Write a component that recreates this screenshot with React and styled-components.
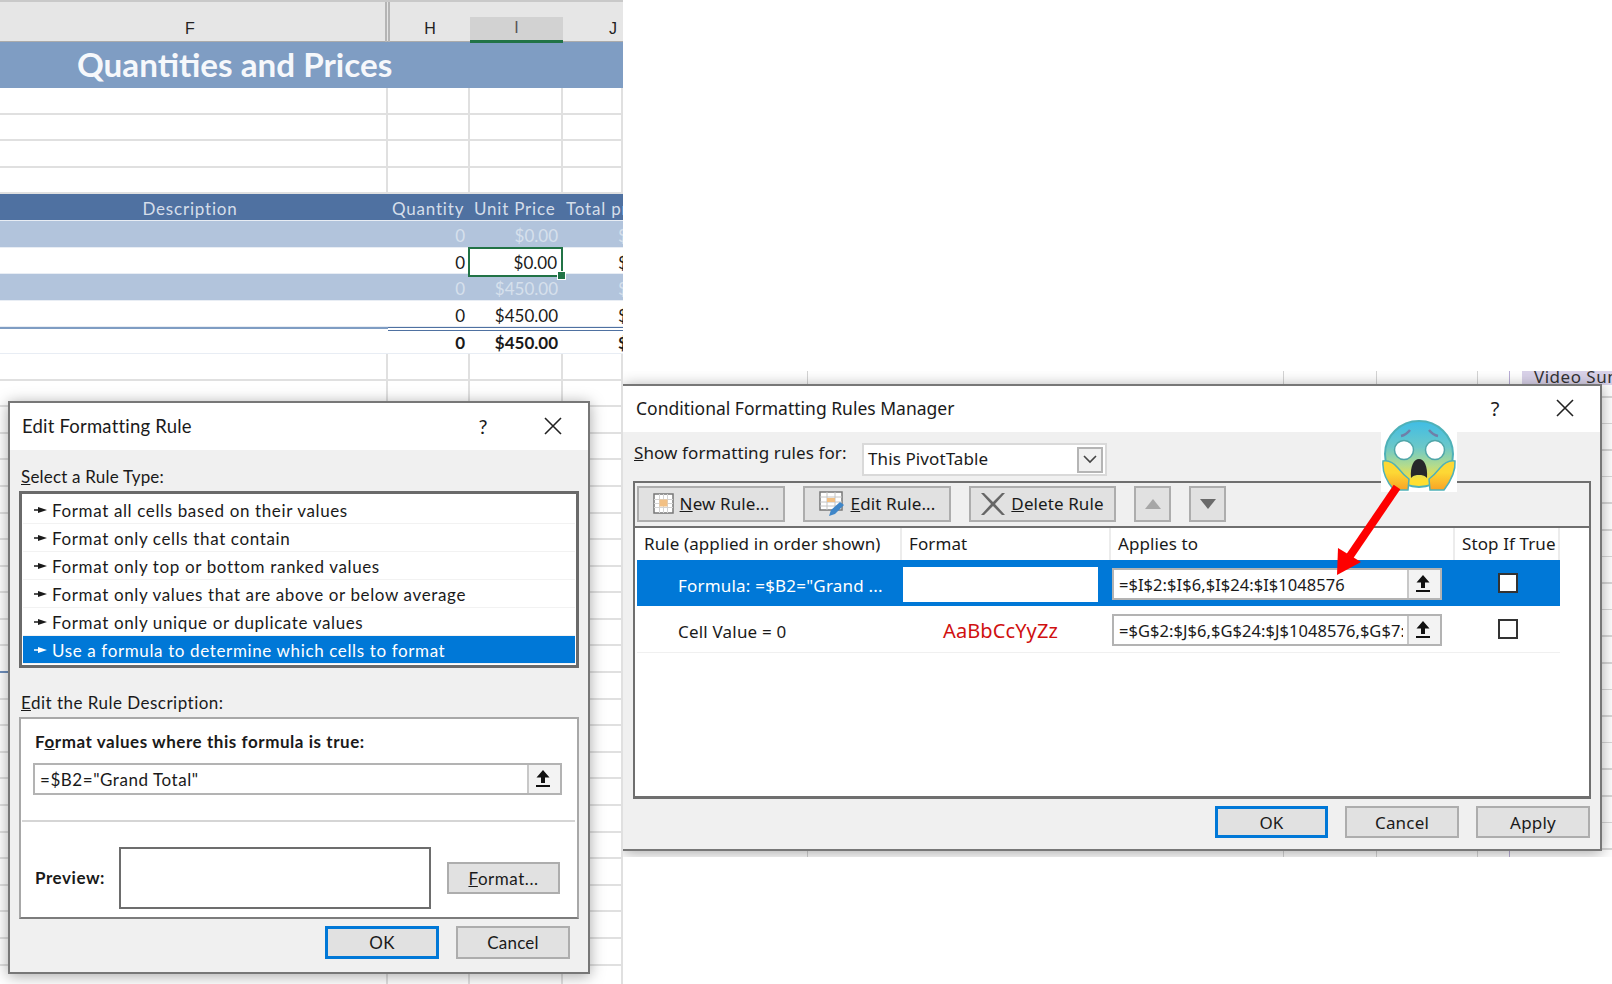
import styled, { createGlobalStyle } from "styled-components";

const uiFont = `"Noto Sans", "Open Sans", sans-serif`;
const sheetFont = `Lato, "Open Sans", sans-serif`;

const GlobalStyle = createGlobalStyle`
  html, body {
    margin: 0;
    background: #fff;
  }
  * {
    box-sizing: border-box;
  }
`;

const Page = styled.div`
  position: relative;
  width: 1612px;
  height: 984px;
  overflow: hidden;
  background: #fff;
  font-family: ${uiFont};
  color: #1a1a1a;
`;

/* left spreadsheet */
const LeftSheet = styled.div`
  position: absolute;
  left: 0;
  top: 0;
  width: 623px;
  height: 984px;
  overflow: hidden;
  font-family: ${sheetFont};
`;

const ColumnHeader = styled.div`
  display: grid;
  grid-template-columns: 388px 82px 93px 60px;
  height: 42px;
  background: #e6e6e6;
  border-top: 2px solid #c9c9c9;
  border-bottom: 1px solid #ababab;
`;

const ColumnLetter = styled.div`
  display: flex;
  align-items: flex-end;
  justify-content: center;
  padding-bottom: 2px;
  padding-left: ${(p) => p.$left || 0}px;
  padding-right: ${(p) => p.$right || 0}px;
  font: 16px/22px "Liberation Sans", Arial, sans-serif;
  color: #222;
  ${(p) => p.$active && `
    margin-top: 15px;
    margin-bottom: -1px;
    padding-bottom: 1px;
    background: #d2d2d2;
    border-bottom: 3px solid #217346;
    color: #555;
  `}
  ${(p) => p.$split && `
    margin-left: -3px;
    border-left: 5px double #b5b5b5;
  `}
`;

const TitleBand = styled.div`
  height: 46px;
  background: #7f9dc3;
  color: #f6f8fb;
  font-size: 33.2px;
  font-weight: 700;
  line-height: 45px;
  padding-left: 77px;
`;

const SheetRow = styled.div`
  display: grid;
  grid-template-columns: 388px 82px 93px 60px;
  height: 26.6px;
  white-space: nowrap;
  background: ${(p) => (p.$kind === "head" ? "#4f71a1" : p.$kind === "tint" ? "#b2c4dc" : "#fff")};
  color: ${(p) => (p.$kind === "head" ? "#d5deea" : p.$kind === "tint" ? "#d6e0ec" : "#1a1a1a")};
  font-weight: ${(p) => (p.$kind === "total" ? 700 : 400)};
  border-bottom: ${(p) => (p.$kind ? "1px solid #e8edf4" : "none")};
  letter-spacing: ${(p) => (p.$kind === "head" ? "0.8px" : "0")};
  font-size: 17px;
  line-height: 26px;
`;

const SheetCell = styled.div`
  text-align: ${(p) => p.$align || "right"};
  padding: ${(p) => (p.$grid ? 0 : 2)}px ${(p) => p.$pad || 5}px 0 ${(p) => p.$left || 0}px;
  overflow: hidden;
  ${(p) => p.$grid && `
    border-right: 2px solid #e0e0e0;
    border-bottom: 2px solid #e0e0e0;
  `}
  ${(p) => p.$ruled && `border-bottom: 2px solid #6f8fbc;`}
  ${(p) => p.$rule === "single" && `box-shadow: inset 0 2px 0 #7f9dc3;`}
  ${(p) => p.$rule === "double" && `border-top: 4px double #4f71a1; padding-top: 0; line-height: 24px;`}
`;

const SelectedCell = styled(SheetCell)`
  position: relative;
  z-index: 2;
  height: 30px;
  margin: -1px 0 -3px -2px;
  padding-top: 1px;
  padding-right: 4px;
  background: #fff;
  border: 2px solid #217346;
  overflow: visible;
  &::after {
    content: "";
    position: absolute;
    right: -5px;
    bottom: -5px;
    width: 7px;
    height: 7px;
    background: #217346;
    border: 1px solid #fff;
  }
`;

/* right spreadsheet behind the manager dialog */
const RightSheet = styled.div`
  position: absolute;
  left: 623px;
  top: 371px;
  width: 989px;
  height: 486px;
  overflow: hidden;
  background-color: #fff;
  background-image:
    linear-gradient(#d4d4d4, #d4d4d4), linear-gradient(#d4d4d4, #d4d4d4),
    linear-gradient(#d4d4d4, #d4d4d4), linear-gradient(#d4d4d4, #d4d4d4),
    linear-gradient(#b9add6, #b9add6),
    repeating-linear-gradient(#fff 0 25px, #d8d8d8 25px 26.6px);
  background-size: 1px 100%, 1px 100%, 1px 100%, 1px 100%, 1px 100%, 100% 100%;
  background-position: 184px 0, 660px 0, 753px 0, 854px 0, 886px 0, 0 0;
  background-repeat: no-repeat;
`;

const VideoTag = styled.div`
  position: absolute;
  left: 899px;
  top: 0;
  width: 90px;
  height: 14px;
  padding-left: 12px;
  overflow: hidden;
  background: #d9d2e9;
  font-size: 17px;
  letter-spacing: 0.5px;
  line-height: 11px;
  white-space: nowrap;
  color: #333;
`;

/* dialogs */
const Window = styled.div`
  position: absolute;
  display: flex;
  flex-direction: column;
  background: #f0f0f0;
  border: 2px solid #777;
  box-shadow: 0 2px 14px rgba(0, 0, 0, 0.35);
  font-size: 17px;
`;

const RuleWindow = styled(Window)`
  left: 8px;
  top: 401px;
  width: 582px;
  height: 573px;
  letter-spacing: 0.55px;
`;

const ManagerWindow = styled(Window)`
  left: 0;
  top: 13px;
  width: 979px;
  height: 467px;
  border-left: 0;
  letter-spacing: 0.1px;
`;

const TitleBar = styled.div`
  display: flex;
  align-items: center;
  flex-shrink: 0;
  height: ${(p) => p.$height}px;
  padding-left: ${(p) => p.$left}px;
  padding-right: 26px;
  padding-bottom: 2px;
  background: #fff;
  font-size: ${(p) => p.$size || 17.5}px;
  letter-spacing: ${(p) => p.$spacing || 0}px;
`;

const TitleText = styled.div`
  flex: 1;
  white-space: nowrap;
`;

const Help = styled.div`
  width: 14px;
  margin-right: 54px;
  text-align: center;
  font-size: 20px;
`;

const RuleBody = styled.div`
  display: flex;
  flex-direction: column;
  padding: 0 9px;
`;

const Label = styled.div`
  height: 20px;
  line-height: 20px;
  margin-top: ${(p) => p.$top}px;
  margin-bottom: 4px;
  padding-left: 2px;
  letter-spacing: ${(p) => p.$spacing}px;
  white-space: nowrap;
`;

const Key = styled.span`
  text-decoration: underline;
`;

const ListBox = styled.div`
  height: 177px;
  padding: 2px 1px 0;
  background: #fff;
  border: 3px solid #6a6a6a;
`;

const ListRow = styled.div`
  display: flex;
  align-items: center;
  gap: 4px;
  height: 28px;
  padding-left: 11px;
  padding-top: 1px;
  letter-spacing: 0.63px;
  white-space: nowrap;
  border-bottom: 1px solid #f2f2f2;
  background: ${(p) => (p.$selected ? "#0078d7" : "#fff")};
  color: ${(p) => (p.$selected ? "#fff" : "#1a1a1a")};
`;

const DescribeBox = styled.div`
  display: flex;
  flex-direction: column;
  height: 202px;
  padding-top: 13px;
  background: #fff;
  border: 2px solid #a8a8a8;
  border-bottom-color: #7c7c7c;
`;

const BoldLine = styled.div`
  height: 20px;
  line-height: 20px;
  margin-left: 14px;
  font-weight: 700;
  white-space: nowrap;
`;

const RefInput = styled.div`
  display: flex;
  flex-shrink: 0;
  height: 32px;
  padding-left: 5px;
  background: #fff;
  border: 2px solid #b3b3b3;
  line-height: 29px;
  white-space: nowrap;
  overflow: hidden;
`;

const FormulaInput = styled(RefInput)`
  width: 529px;
  margin: 11px 0 0 12px;
`;

const RefText = styled.div`
  flex: 1;
  margin-right: 4px;
  overflow: hidden;
`;

const RefButton = styled.div`
  display: flex;
  align-items: center;
  justify-content: center;
  flex-shrink: 0;
  width: 33px;
  padding-right: 3px;
  background: #f3f3f3;
  border-left: 2px solid #c8c8c8;
`;

const Divider = styled.div`
  height: 2px;
  margin: 25px 2px 25px 1px;
  background: #d5d5d5;
`;

const PreviewRow = styled.div`
  display: flex;
  align-items: center;
`;

const PreviewLabel = styled(BoldLine)`
  width: 84px;
`;

const PreviewBox = styled.div`
  width: 312px;
  height: 62px;
  margin-right: 16px;
  border: 2px solid #6d6d6d;
  background: #fff;
`;

const Button = styled.div`
  display: flex;
  align-items: center;
  justify-content: center;
  width: ${(p) => p.$w || 114}px;
  height: ${(p) => p.$h || 33}px;
  background: #e1e1e1;
  border: 2px solid ${(p) => (p.$primary ? "#0078d7" : "#adadad")};
  ${(p) => p.$primary && "border-width: 3px;"}
  white-space: nowrap;
`;

const Footer = styled.div`
  display: flex;
  justify-content: flex-end;
  gap: 17px;
  margin-top: 7px;
  padding-right: ${(p) => p.$right}px;
  letter-spacing: 0.2px;
`;

/* manager dialog */
const FilterRow = styled.div`
  display: flex;
  margin: 10px 0 5px 11px;
  padding-top: 1px;
`;

const FilterLabel = styled.div`
  width: 228px;
  height: 22px;
  line-height: 20px;
  letter-spacing: 0.1px;
  white-space: nowrap;
`;

const Combo = styled.div`
  display: flex;
  align-items: center;
  justify-content: space-between;
  width: 245px;
  height: 33px;
  padding: 0 2px 2px 4px;
  background: #fff;
  border: 2px solid #d9d9d9;
`;

const ComboArrow = styled.div`
  display: flex;
  align-items: center;
  justify-content: center;
  width: 26px;
  height: 26px;
  margin-bottom: -2px;
  background: #f0f0f0;
  border: 2px solid #b5b5b5;
`;

const GroupBox = styled.div`
  display: flex;
  flex-direction: column;
  width: 958px;
  height: 318px;
  margin-left: 10px;
  border: 2px solid #6f6f6f;
  border-bottom-width: 3px;
`;

const Toolbar = styled.div`
  display: flex;
  gap: 18px;
  flex-shrink: 0;
  height: 43px;
  padding: 3px 2px 0;
`;

const ToolButton = styled(Button)`
  gap: 6px;
  padding-bottom: 1px;
`;

const RuleList = styled.div`
  flex: 1;
  padding: 0 2px;
  background: #fff;
  border-top: 2px solid #6f6f6f;
`;

const RuleGrid = styled.div`
  display: grid;
  grid-template-columns: 265px 209px 344px 105px;
  width: 923px;
`;

const RuleHead = styled(RuleGrid)`
  height: 32px;
  line-height: 32px;
`;

const RuleHeadCell = styled.div`
  padding-left: 7px;
  border-right: 2px solid #ececec;
  white-space: nowrap;
  overflow: hidden;
`;

const RuleRow = styled(RuleGrid)`
  align-items: center;
  height: ${(p) => (p.$selected ? 46 : 47)}px;
  background: ${(p) => (p.$selected ? "#0078d7" : "#fff")};
  color: ${(p) => (p.$selected ? "#fff" : "#1a1a1a")};
  border-bottom: ${(p) => (p.$selected ? "none" : "1px solid #f0f0f0")};
`;

const RuleName = styled.div`
  padding-left: 41px;
  padding-top: 4px;
  letter-spacing: 0.2px;
  white-space: nowrap;
`;

const FormatCell = styled.div`
  display: flex;
  align-items: center;
  justify-content: center;
  width: 195px;
  height: 35px;
  margin-left: 1px;
  margin-top: 2px;
  color: #d01010;
  font-size: 20px;
  background: ${(p) => (p.$blank ? "#fff" : "transparent")};
`;

const AppliesInput = styled(RefInput)`
  width: 330px;
  margin: 2px 0 0 1px;
  color: #1a1a1a;
  font-size: 16.5px;
  letter-spacing: 0.05px;
  line-height: 30px;
`;

const CheckCell = styled.div`
  display: flex;
  justify-content: center;
`;

const CheckBox = styled.div`
  width: 20px;
  height: 20px;
  background: #fff;
  border: 2px solid #333;
`;

/* overlays */
const EmojiPin = styled.svg`
  position: absolute;
  left: 1381px;
  top: 420px;
`;

const ArrowPin = styled.svg`
  position: absolute;
  left: 1330px;
  top: 480px;
`;

const PointerIcon = () => (
  <svg width="14" height="10" viewBox="0 0 14 10">
    <path d="M0 4.200h4V2l9 3-9 3V5.800H0z" fill="currentColor" />
  </svg>
);

const UploadIcon = () => (
  <svg width="18" height="20" viewBox="0 0 18 20">
    <path d="M9 1 2.500 8.500H7V14h4V8.500h4.500z" fill="#111" />
    <rect x="2" y="16" width="14" height="2" fill="#111" />
  </svg>
);

const CloseIcon = () => (
  <svg width="18" height="18" viewBox="0 0 18 18">
    <path d="M1 1l16 16M17 1 1 17" stroke="#222" strokeWidth="1.6" fill="none" />
  </svg>
);

const NewRuleIcon = () => (
  <svg width="21" height="21" viewBox="0 0 21 21">
    <rect x="1" y="1" width="19" height="19" fill="#fff" stroke="#777" strokeWidth="1.5" />
    <path d="M1 6.500h19M1 10.500h19M1 14.500h19M6.500 1v19M10.500 1v19M14.500 1v19" stroke="#d4d4d4" strokeWidth="1" />
    <rect x="6.500" y="6.500" width="8" height="7" fill="#f2c084" />
  </svg>
);

const EditRuleIcon = () => (
  <svg width="26" height="26" viewBox="0 0 26 26">
    <rect x="1" y="1" width="22" height="18" fill="#fff" stroke="#777" strokeWidth="1.500" />
    <path d="M1 6h22M1 11h22M1 15h22M8 1v18M16 1v18" stroke="#c4c4c4" strokeWidth="1" />
    <rect x="8" y="7" width="8" height="4" fill="#f2c084" />
    <path d="M10 25l2-6 9-8 4 3-9 9z" fill="#3f86c8" />
  </svg>
);

const DeleteIcon = () => (
  <svg width="24" height="24" viewBox="0 0 24 24">
    <path d="M0 1h3l9 9 9-9h3L14 12l10 11h-3l-9-9-9 9H0l10-11z" fill="#666" />
  </svg>
);

const Triangle = ({ up, color }) => (
  <svg width="16" height="10" viewBox="0 0 16 10">
    <path d={up ? "M8 0l8 10H0z" : "M0 0h16L8 10z"} fill={color} />
  </svg>
);

const Chevron = () => (
  <svg width="14" height="9" viewBox="0 0 14 9">
    <path d="M1 1l6 6 6-6" stroke="#444" strokeWidth="1.6" fill="none" />
  </svg>
);

const ScreamEmoji = () => (
  <EmojiPin width="76" height="72" viewBox="0 0 76 72">
    <defs>
      <linearGradient id="face" x1="0" y1="0" x2="0" y2="1">
        <stop offset="0" stopColor="#3fbde6" />
        <stop offset="0.4" stopColor="#6cc8c8" />
        <stop offset="0.68" stopColor="#b4dc8c" />
        <stop offset="0.9" stopColor="#ffdf30" />
      </linearGradient>
      <linearGradient id="hand" x1="0" y1="0" x2="0" y2="1">
        <stop offset="0.4" stopColor="#fdd835" />
        <stop offset="1" stopColor="#f8a325" />
      </linearGradient>
    </defs>
    <rect x="0" y="12" width="76" height="60" fill="#fff" />
    <ellipse cx="38" cy="34" rx="34" ry="33" fill="url(#face)" stroke="#4fb1b8" strokeWidth="2" />
    <circle cx="23" cy="30" r="9.500" fill="#fff" stroke="#4fa5a8" strokeWidth="1.500" />
    <circle cx="54" cy="30" r="9.500" fill="#fff" stroke="#4fa5a8" strokeWidth="1.500" />
    <path d="M20 16q5-1 9-6M57 16q-5-1-9-6" stroke="#6f7fa8" strokeWidth="2.500" fill="none" />
    <path d="M30 58c-1-12 3-19 8-19s9 7 8 19c-3-3-5-3-8-3s-5 0-8 3z" fill="#26282a" />
    <path d="M2 41c5-1 10 1 15 7 4 5 7 8 11 11l-1 11H13C6 62 1 52 2 41z" fill="url(#hand)" stroke="#4fb1b8" strokeWidth="1.500" />
    <path d="M74 41c-5-1-10 1-15 7-4 5-7 8-11 11l1 11h14c6-8 12-18 11-29z" fill="url(#hand)" stroke="#4fb1b8" strokeWidth="1.500" />
  </EmojiPin>
);

const RedArrow = () => (
  <ArrowPin width="75" height="100" viewBox="0 0 75 100">
    <path d="M67 7 20 76" stroke="#fe0000" strokeWidth="8" fill="none" />
    <path d="M7 95 8 68 31 82z" fill="#fe0000" />
  </ArrowPin>
);

const ruleTypes = [
  "Format all cells based on their values",
  "Format only cells that contain",
  "Format only top or bottom ranked values",
  "Format only values that are above or below average",
  "Format only unique or duplicate values",
  "Use a formula to determine which cells to format",
];

const dataRows = [
  { kind: "tint", qty: "0", price: "$0.00" },
  { kind: "plain", qty: "0", price: "$0.00", selected: true },
  { kind: "tint", qty: "0", price: "$450.00" },
  { kind: "plain", qty: "0", price: "$450.00" },
  { kind: "total", qty: "0", price: "$450.00" },
];

const BlankRow = ({ ruled }) => (
  <SheetRow>
    <SheetCell $grid $ruled={ruled} />
    <SheetCell $grid />
    <SheetCell $grid />
    <SheetCell $grid />
  </SheetRow>
);

function Spreadsheet() {
  return (
    <>
      <ColumnHeader>
        <ColumnLetter $right={8}>F</ColumnLetter>
        <ColumnLetter $split>H</ColumnLetter>
        <ColumnLetter $active>I</ColumnLetter>
        <ColumnLetter $left={40}>J</ColumnLetter>
      </ColumnHeader>
      <TitleBand>Quantities and Prices</TitleBand>
      {[0, 1, 2, 3].map((i) => (
        <BlankRow key={i} />
      ))}
      <SheetRow $kind="head">
        <SheetCell $align="center" $pad={8}>Description</SheetCell>
        <SheetCell $pad={1} $left={4} $align="left">Quantity</SheetCell>
        <SheetCell $align="left" $left={4}>Unit Price</SheetCell>
        <SheetCell $align="left" $left={3} $pad={1}>Total price</SheetCell>
      </SheetRow>
      {dataRows.map((row, i) => {
        const PriceCell = row.selected ? SelectedCell : SheetCell;
        const total = row.kind === "total";
        return (
          <SheetRow key={i} $kind={row.kind}>
            <SheetCell $rule={total ? "single" : undefined} />
            <SheetCell $rule={total ? "double" : undefined}>{row.qty}</SheetCell>
            <PriceCell $rule={total ? "double" : undefined}>{row.price}</PriceCell>
            <SheetCell $rule={total ? "double" : undefined} $align="left" $left={55} $pad={1}>$</SheetCell>
          </SheetRow>
        );
      })}
      {Array.from({ length: 24 }, (_, i) => (
        <BlankRow key={i} ruled={i === 11} />
      ))}
      <RuleWindow>
        <TitleBar $height={47} $left={12} $size={18.5} $spacing={0.2}>
          <TitleText>Edit Formatting Rule</TitleText>
          <Help>?</Help>
          <CloseIcon />
        </TitleBar>
        <RuleBody>
          <Label $top={17} $spacing={0.2}><Key>S</Key>elect a Rule Type:</Label>
          <ListBox>
            {ruleTypes.map((text, i) => (
              <ListRow key={text} $selected={i === 5}>
                <PointerIcon />
                {text}
              </ListRow>
            ))}
          </ListBox>
          <Label $top={25} $spacing={0.48}><Key>E</Key>dit the Rule Description:</Label>
          <DescribeBox>
            <BoldLine>F<Key>o</Key>rmat values where this formula is true:</BoldLine>
            <FormulaInput>
              <RefText>=$B2="Grand Total"</RefText>
              <RefButton><UploadIcon /></RefButton>
            </FormulaInput>
            <Divider />
            <PreviewRow>
              <PreviewLabel>Preview:</PreviewLabel>
              <PreviewBox />
              <Button $h={32} $w={113}><span><Key>F</Key>ormat...</span></Button>
            </PreviewRow>
          </DescribeBox>
          <Footer $right={9}>
            <Button $primary>OK</Button>
            <Button>Cancel</Button>
          </Footer>
        </RuleBody>
      </RuleWindow>
    </>
  );
}

function RulesManager() {
  return (
    <ManagerWindow>
      <TitleBar $height={46} $left={13}>
        <TitleText>Conditional Formatting Rules Manager</TitleText>
        <Help>?</Help>
        <CloseIcon />
      </TitleBar>
      <FilterRow>
        <FilterLabel><Key>S</Key>how formatting rules for:</FilterLabel>
        <Combo>
          This PivotTable
          <ComboArrow><Chevron /></ComboArrow>
        </Combo>
      </FilterRow>
      <GroupBox>
        <Toolbar>
          <ToolButton $w={148} $h={36}><NewRuleIcon /><span><Key>N</Key>ew Rule...</span></ToolButton>
          <ToolButton $w={148} $h={36}><EditRuleIcon /><span><Key>E</Key>dit Rule...</span></ToolButton>
          <ToolButton $w={147} $h={36}><DeleteIcon /><span><Key>D</Key>elete Rule</span></ToolButton>
          <Button $w={37} $h={36}><Triangle up color="#a6a6a6" /></Button>
          <Button $w={37} $h={36}><Triangle color="#6a6a6a" /></Button>
        </Toolbar>
        <RuleList>
          <RuleHead>
            <RuleHeadCell>Rule (applied in order shown)</RuleHeadCell>
            <RuleHeadCell>Format</RuleHeadCell>
            <RuleHeadCell>Applies to</RuleHeadCell>
            <RuleHeadCell>Stop If True</RuleHeadCell>
          </RuleHead>
          <RuleRow $selected>
            <RuleName>Formula: =$B2="Grand ...</RuleName>
            <FormatCell $blank />
            <AppliesInput>
              <RefText>=$I$2:$I$6,$I$24:$I$1048576</RefText>
              <RefButton><UploadIcon /></RefButton>
            </AppliesInput>
            <CheckCell><CheckBox /></CheckCell>
          </RuleRow>
          <RuleRow>
            <RuleName>Cell Value = 0</RuleName>
            <FormatCell>AaBbCcYyZz</FormatCell>
            <AppliesInput>
              <RefText>=$G$2:$J$6,$G$24:$J$1048576,$G$7:$J$23</RefText>
              <RefButton><UploadIcon /></RefButton>
            </AppliesInput>
            <CheckCell><CheckBox /></CheckCell>
          </RuleRow>
        </RuleList>
      </GroupBox>
      <Footer $right={10}>
        <Button $primary $w={113} $h={32}>OK</Button>
        <Button $h={32}>Cancel</Button>
        <Button $h={32}>Apply</Button>
      </Footer>
    </ManagerWindow>
  );
}

export default function App() {
  return (
    <>
      <GlobalStyle />
      <Page>
        <RightSheet>
          <VideoTag>Video Summary</VideoTag>
          <RulesManager />
        </RightSheet>
        <LeftSheet>
          <Spreadsheet />
        </LeftSheet>
        <ScreamEmoji />
        <RedArrow />
      </Page>
    </>
  );
}
